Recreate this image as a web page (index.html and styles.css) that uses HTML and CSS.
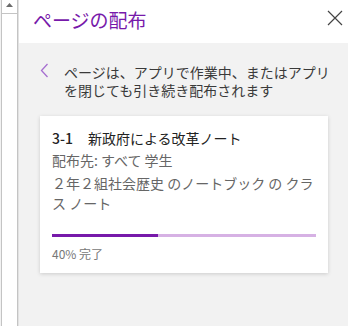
FILE: index.html
```html
<!DOCTYPE html>
<html lang="ja">
<head>
    <meta charset="UTF-8">
    <meta name="viewport" content="width=device-width, initial-scale=1.0">
    <title>ページの配布</title>
    <link rel="stylesheet" href="styles.css">
</head>
<body>
    <div class="layout">
        <!-- left scrollbar strip -->
        <div class="scrollbar">
            <div class="scroll-up">
                <svg width="7" height="4" viewBox="0 0 7 4"><polygon points="0,4 7,4 3.5,0" fill="#6b6b6b"/></svg>
            </div>
        </div>

        <div class="panel">
            <div class="panel-header">
                <h1 class="panel-title">ページの配布</h1>
                <button class="close-btn" aria-label="閉じる">
                    <svg width="16" height="16" viewBox="0 0 16 16">
                        <path d="M1 1 L15 15 M15 1 L1 15" stroke="#444" stroke-width="1.2" fill="none"/>
                    </svg>
                </button>
            </div>

            <div class="panel-body">
                <div class="intro">
                    <svg class="back" width="9" height="15" viewBox="0 0 9 15">
                        <path d="M7.5 1 L1.5 7.5 L7.5 14" stroke="#a66fd0" stroke-width="1.3" fill="none"/>
                    </svg>
                    <p class="intro-text">ページは、アプリで作業中、またはアプリを閉じても引き続き配布されます</p>
                </div>

                <div class="card">
                    <div class="card-title"><span class="card-num">3-1</span>新政府による改革ノート</div>
                    <div class="card-meta">配布先: すべて 学生</div>
                    <div class="card-desc">２年２組社会歴史 のノートブック の クラ<br>ス ノート</div>
                    <div class="progress">
                        <div class="progress-fill" style="width: 40%"></div>
                    </div>
                    <div class="progress-label">40% 完了</div>
                </div>
            </div>
        </div>
    </div>
</body>
</html>
```

FILE: styles.css
```css
html, body {
    margin: 0;
    height: 100%;
}
body {
    font-family: "Noto Sans CJK JP", "Noto Sans", sans-serif;
    color: #333;
    background-color: #f2f2f2;
}
.layout {
    display: flex;
    height: 100%;
}
.scrollbar {
    width: 15px;
    border-left: 1px solid #c4c4c4;
    border-right: 1px solid #c4c4c4;
    margin-left: 1px;
    background-color: #fff;
    box-shadow: 1px 0 0 #e2e2e2;
    margin-right: 1px;
}
.scroll-up {
    height: 13px;
    border-bottom: 1px solid #c4c4c4;
    display: flex;
    justify-content: center;
    align-items: center;
}
.scroll-up svg {
    display: block;
    margin-top: -3px;
}
.panel {
    flex: 1;
    display: flex;
    flex-direction: column;
}
.panel-header {
    height: 43px;
    background-color: #fff;
    display: flex;
    align-items: center;
    justify-content: space-between;
    padding-left: 14px;
    padding-right: 5px;
}
.panel-title {
    margin: 0;
    font-size: 19px;
    font-weight: normal;
    color: #7719aa;
    line-height: 24px;
    margin-top: -4px;
}
.close-btn {
    border: none;
    background: none;
    padding: 0;
    margin-top: -8px;
    display: flex;
}
.panel-body {
    flex: 1;
    padding: 20px 0 0 21px;
}
.intro {
    display: flex;
    align-items: flex-start;
    padding-right: 8px;
}
.back {
    margin-right: 15px;
    flex-shrink: 0;
}
.intro-text {
    margin: 0;
    font-size: 14px;
    line-height: 18px;
    color: #3a3a3a;
}
.card {
    margin-top: 17px;
    margin-right: 20px;
    background-color: #fff;
    box-shadow: 0 1px 4px rgba(0, 0, 0, 0.16);
    padding: 12px 12px 11px 12px;
}
.card-title {
    font-size: 14px;
    line-height: 20px;
    color: #222;
}
.card-num {
    font-weight: 500;
    margin-right: 15px;
}
.card-meta {
    margin-top: 2px;
    font-size: 14px;
    line-height: 20px;
    color: #666;
}
.card-desc {
    margin-top: 3px;
    font-size: 14px;
    line-height: 20px;
    color: #666;
}
.progress {
    margin-top: 21px;
    height: 3px;
    background-color: #d6b1e4;
}
.progress-fill {
    height: 100%;
    background-color: #7719aa;
}
.progress-label {
    margin-top: 9px;
    font-size: 12px;
    line-height: 16px;
    color: #777;
}
```
